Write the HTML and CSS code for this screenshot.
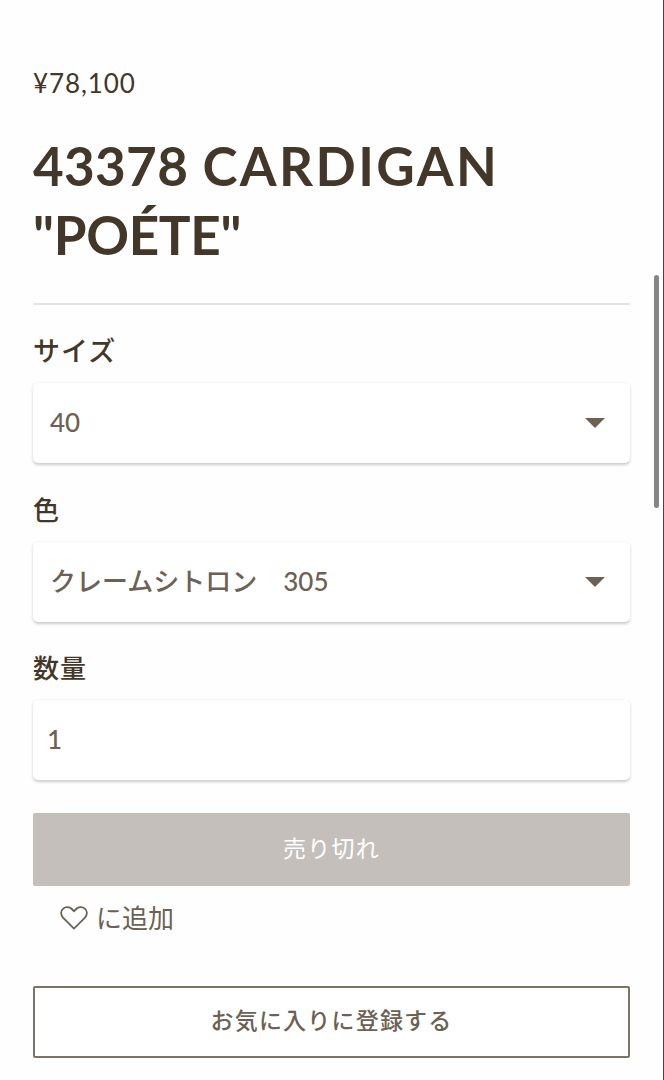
FILE: index.html
```html
<!DOCTYPE html>
<html lang="ja">
<head>
    <meta charset="UTF-8">
    <meta name="viewport" content="width=device-width, initial-scale=1.0">
    <title>43378 CARDIGAN "POÉTE"</title>
    <link rel="stylesheet" href="styles.css">
</head>
<body>
    <div class="product">
        <p class="price">¥78,100</p>
        <h1 class="title">43378 <span class="name">CARDIGAN</span><br><span class="model">"POÉTE"</span></h1>
        <hr class="line">

        <form class="product_form">
            <!-- サイズ -->
            <div class="field">
                <label class="kana" for="size">サイズ</label>
                <div class="control">
                    <select id="size">
                        <option>40</option>
                    </select>
                    <svg class="arrow" viewBox="0 0 20 10"><path d="M0 0h20L10 10z"/></svg>
                </div>
            </div>
            <!-- 色 -->
            <div class="field">
                <label for="color">色</label>
                <div class="control">
                    <select id="color">
                        <option>クレームシトロン　305</option>
                    </select>
                    <svg class="arrow" viewBox="0 0 20 10"><path d="M0 0h20L10 10z"/></svg>
                </div>
            </div>
            <!-- 数量 -->
            <div class="field">
                <label for="quantity">数量</label>
                <div class="control">
                    <input id="quantity" class="quantity" type="text" value="1">
                </div>
            </div>

            <button class="btn sold_out" type="button" disabled>売り切れ</button>
            <a class="wish">
                <svg class="heart" viewBox="0 0 28 24"><path d="M14 22.6L3.2 11.8C.4 9 .5 5 2.9 2.8 5.6.4 9.5.7 11.8 3L14 5.2 16.2 3c2.3-2.3 6.2-2.6 8.9-.2 2.4 2.2 2.5 6.2-.3 9z"/></svg>
                <span>に追加</span>
            </a>
            <button class="btn favorite" type="button">お気に入りに登録する</button>
        </form>
    </div>

    <!-- スクロールバー -->
    <div class="scrollbar"></div>
</body>
</html>
```

FILE: styles.css
```css
*{
    margin: 0;
    padding: 0;
    box-sizing: border-box;
}
body{
    height: 1080px;
    overflow: hidden;
    position: relative;
    background: #fefefe;
    border-right: 1px solid #444;
    color: #433729;
    font-family: Optima, Lato, "Noto Sans CJK JP", sans-serif;
}
.product{
    width: 597px;
    margin-left: 33px;
    padding-top: 64px;
}
.price{
    height: 38px;
    line-height: 38px;
    font-size: 26px;
    letter-spacing: 0.9px;
}
.title{
    margin-top: 29px;
    font-size: 53px;
    line-height: 69px;
    font-weight: 700;
    letter-spacing: 0.3px;
    white-space: nowrap;
}
.title .name{
    margin-left: 1px;
    letter-spacing: 2.4px;
}
.title .model{
    letter-spacing: -0.3px;
}
.line{
    margin-top: 34px;
    border: none;
    height: 2px;
    background: #e4e4e4;
}
.product_form{
    padding-top: 26px;
}
.field{
    height: 158.6px;
}
.field label{
    display: block;
    height: 52px;
    line-height: 40px;
    font-size: 26px;
    font-weight: 500;
    letter-spacing: 1px;
}
.field label.kana{
    font-size: 27px;
}
.control{
    position: relative;
    height: 80px;
    border-radius: 5px;
    background: #fff;
    box-shadow: 0 1.5px 3px rgba(0, 0, 0, 0.2);
}
.control select,.control input{
    display: block;
    width: 100%;
    height: 80px;
    padding: 0 17px 2px;
    border: none;
    outline: none;
    appearance: none;
    background: transparent;
    color: #6c6153;
    font-family: inherit;
    font-size: 26px;
    font-weight: 500;
}
.control .quantity{
    padding: 0 14px 3px;
}
.arrow{
    position: absolute;
    right: 25px;
    top: 35px;
    width: 20px;
    height: 10px;
    fill: #6c6153;
}
.btn{
    display: block;
    width: 597px;
    height: 73px;
    border-radius: 2px;
    font-family: inherit;
    font-size: 23px;
    font-weight: 500;
    letter-spacing: 1.2px;
}
.sold_out{
    margin-top: 6px;
    padding-bottom: 5px;
    border: none;
    background: #c5bfbb;
    color: #fff;
    font-weight: 400;
}
.wish{
    display: flex;
    align-items: center;
    height: 64px;
    margin-left: 27px;
    font-size: 26px;
    line-height: 64px;
    color: #6c6153;
}
.heart{
    width: 28px;
    height: 24px;
    margin-right: 8px;
    fill: none;
    stroke: #6c6153;
    stroke-width: 1.8;
}
.favorite{
    height: 72px;
    margin-top: 36px;
    padding-bottom: 5px;
    border: 2px solid #7d7368;
    background: #fff;
    color: #6c6153;
}
.scrollbar{
    position: absolute;
    top: 275px;
    right: 4px;
    width: 5px;
    height: 233px;
    border-radius: 3px;
    background: #858585;
}
```
